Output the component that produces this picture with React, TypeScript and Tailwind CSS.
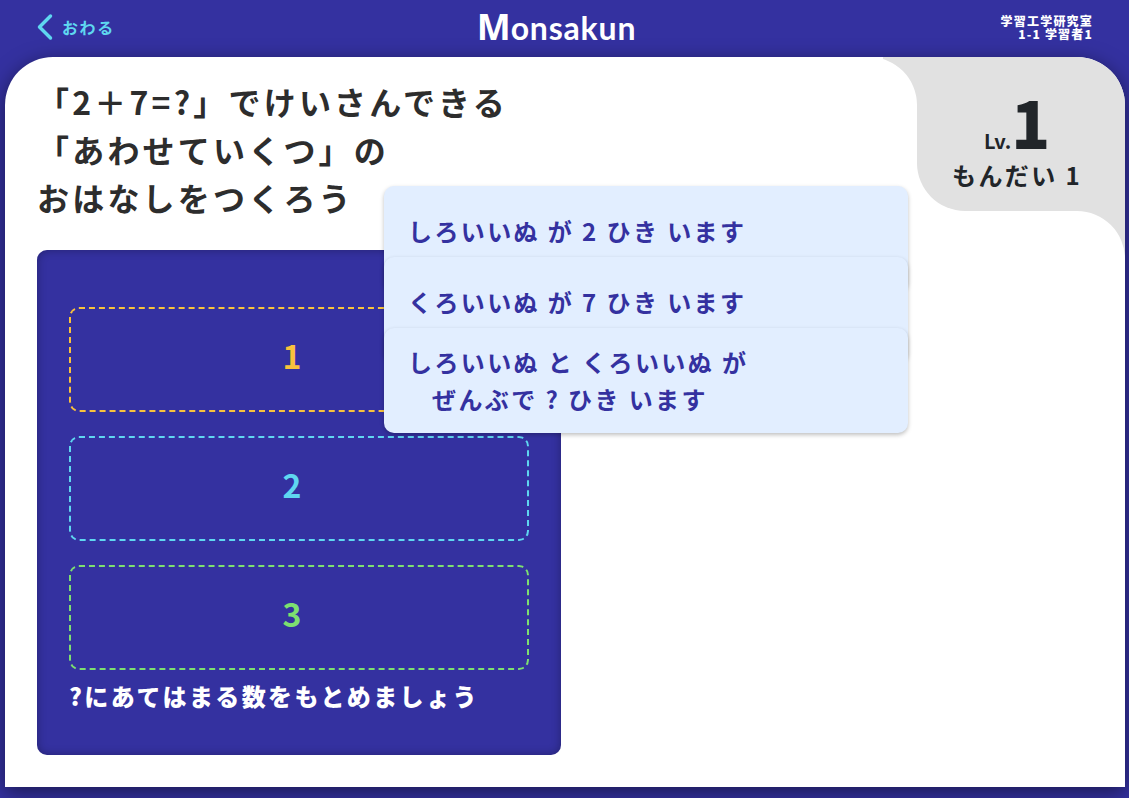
const slots = [
  { id: 1, style: "border-[#f9c23c] text-[#f9c23c]" },
  { id: 2, style: "border-[#5fd7f0] text-[#5fd7f0]" },
  { id: 3, style: "border-[#7de070] text-[#7de070]" },
];

const cards = [
  { id: "white", lines: ["しろいいぬ が 2 ひき います"], spacing: "pb-4" },
  { id: "black", lines: ["くろいいぬ が 7 ひき います"], spacing: "-mt-[34px] pb-4" },
  {
    id: "total",
    lines: ["しろいいぬ と くろいいぬ が", "ぜんぶで ? ひき います"],
    spacing: "-mt-[34px] pb-0.5",
  },
];

function Header() {
  return (
    <header className="grid h-[57px] grid-cols-3 items-center px-9 pb-1">
      <a href="#" className="flex items-center gap-2 justify-self-start text-[#5fd7f0]">
        <svg width="18" height="28" viewBox="0 0 18 28" fill="none" aria-hidden="true">
          <path
            d="M14.5 3 3.5 14l11 11"
            stroke="currentColor"
            strokeWidth="3.5"
            strokeLinecap="round"
            strokeLinejoin="round"
          />
        </svg>
        <span className="text-base font-bold tracking-widest">おわる</span>
      </a>
      <div className="justify-self-center pr-4 font-['Lato',sans-serif] text-[32px] leading-none font-bold tracking-wide text-white">
        <span className="font-['Open_Sans',sans-serif] text-4xl leading-none font-bold tracking-normal">M</span>
        onsakun
      </div>
      <div className="justify-self-end text-right text-xs leading-[13px] font-black tracking-widest text-white">
        <p>学習工学研究室</p>
        <p>1-1 学習者1</p>
      </div>
    </header>
  );
}

function LevelBadge() {
  return (
    <aside className="absolute top-0 right-0 h-[154px] w-[208px] rounded-tr-[48px] rounded-bl-[48px] bg-[#e1e1e1] pt-8 text-[#212529]">
      <svg className="absolute top-0 right-full" width="34" height="48" viewBox="14 0 34 48" aria-hidden="true">
        <path d="M0 0A48 48 0 0 1 48 48V0Z" fill="#e1e1e1" />
      </svg>
      <svg className="absolute top-full right-0" width="48" height="48" viewBox="0 0 48 48" aria-hidden="true">
        <path d="M0 0A48 48 0 0 1 48 48V0Z" fill="#e1e1e1" />
      </svg>
      <p className="flex items-baseline justify-center pr-2 font-bold">
        <span className="text-xl leading-none">Lv.</span>
        <span className="text-[64px] leading-[64px] font-black">1</span>
      </p>
      <p className="mt-1 pr-2 text-center text-2xl leading-9 font-bold tracking-widest">もんだい 1</p>
    </aside>
  );
}

function Board() {
  return (
    <section className="rounded-[10px] bg-[#3431a0] px-8 pt-[57px] pb-[41px] shadow-[inset_0_0_10px_rgba(0,0,0,0.3)]">
      <ol className="flex flex-col gap-6">
        {slots.map((slot) => (
          <li
            key={slot.id}
            className={`flex h-[105px] items-center justify-center rounded-[10px] border-2 border-dashed pr-3.5 pb-2.5 text-[32px] font-bold ${slot.style}`}
          >
            {slot.id}
          </li>
        ))}
      </ol>
      <p className="mt-2 text-2xl leading-9 font-black tracking-widest text-white">?にあてはまる数をもとめましょう</p>
    </section>
  );
}

function CardStack() {
  return (
    <ul className="absolute top-[129px] left-[379px] w-[calc(50%-36px)]">
      {cards.map((card) => (
        <li
          key={card.id}
          draggable
          className={`flex h-[105px] cursor-grab flex-col justify-center rounded-[10px] bg-[#e2eeff] px-6 text-2xl leading-[37px] font-bold tracking-widest text-[#3431a0] shadow-[0_2px_4px_rgba(0,0,0,0.25)] ${card.spacing}`}
        >
          {card.lines.map((line, i) => (
            <p key={line} className={i > 0 ? "pl-6" : ""}>
              {line}
            </p>
          ))}
        </li>
      ))}
    </ul>
  );
}

export default function App() {
  return (
    <div
      lang="ja"
      className="flex min-h-screen flex-col overflow-hidden bg-[#3431a0] font-['Noto_Sans_CJK_JP',sans-serif]"
    >
      <Header />
      <main className="relative mr-1 mb-[11px] ml-[5px] flex-1 rounded-t-[48px] bg-white px-8 pt-5 pb-8 shadow-[0_5px_20px_rgba(0,0,0,0.5)]">
        <LevelBadge />
        <h1 className="text-[32px] leading-[48px] font-bold tracking-widest text-[#2d2d2d]">
          「2＋7=?」でけいさんできる
          <br />
          「あわせていくつ」の
          <br />
          おはなしをつくろう
        </h1>
        <div className="mt-[29px] grid grid-cols-2 gap-2">
          <Board />
        </div>
        <CardStack />
      </main>
    </div>
  );
}
